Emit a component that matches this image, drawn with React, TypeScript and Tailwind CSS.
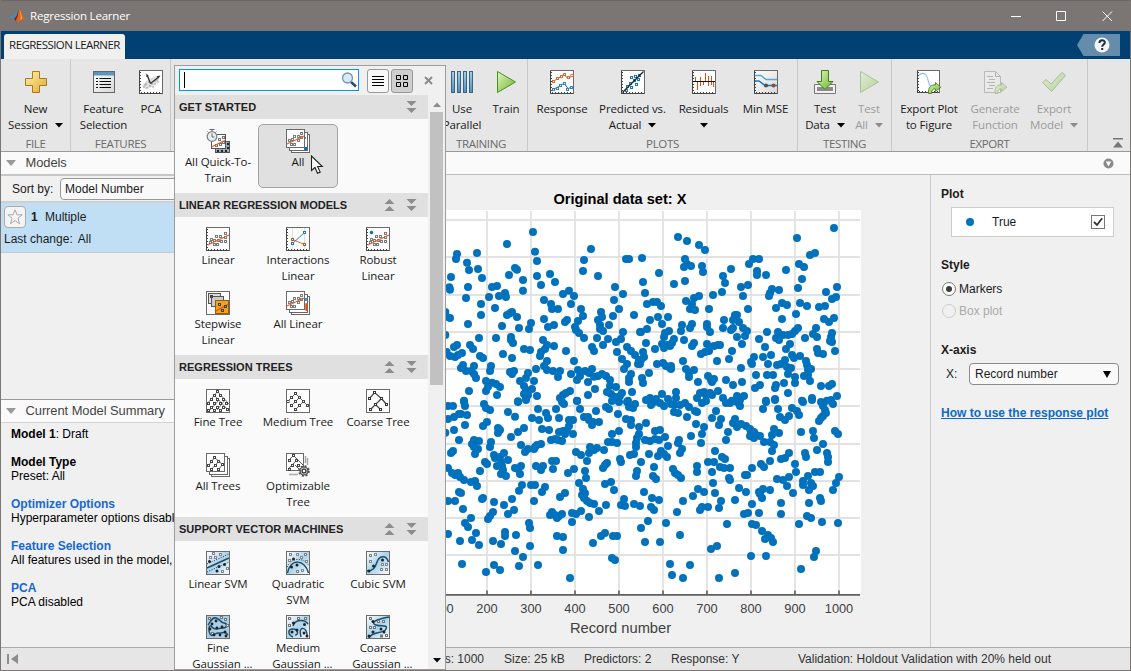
import React from "react";

type Kids = { children?: React.ReactNode };

const UPPER_LEFT =
  "279,96 201,132 111,159 51,162 48,177 81,188 87,210 114,207 126,234 33,231 28,262 30,269 84,261 78,294 156,261 171,258 147,291 177,288 195,279 198,291 207,225 225,204 231,209 249,240 249,272 285,155 291,183 291,228 303,255 330,222 345,246 453,147 432,180 429,213 474,228 558,177 567,177 525,261 549,282 522,300 369,282 387,272 402,288 393,312 312,300 333,312 336,327 354,327 537,327 519,348 582,345 423,327 429,348 483,336 486,351 474,360 414,363 405,381 408,390 417,399 432,414 480,375 480,387 489,393 507,375 375,366 381,360 312,357 342,375 324,381 273,369 267,387 237,384 231,351 216,336 201,345 210,340 186,378 165,324 123,312 123,345 84,372 30,354 16,336 18,350 16,405 117,414 168,414 213,411 213,420 219,429 309,420 321,435 342,438 315,447 303,456 300,468 252,447 270,450 189,462 216,474 120,468 129,474 90,435 99,447 51,435 42,441 20,456 30,468 45,471 66,459 54,465 69,495 63,504 78,513 102,498 93,513 102,522 108,534 153,498 150,513 210,516 222,513 216,522 321,483 312,498 321,510 288,507 339,513 360,513 354,531 264,519 258,534 240,543 282,543 252,558 258,570 276,567 252,582 264,585 258,594 138,543 156,548 144,560 168,552 180,561 138,573 87,573 72,602 171,585 291,588 234,604 378,453 402,483 393,522 414,510 411,540 420,528 435,513 456,507 447,519 462,530 486,522 474,528 498,528 510,540 444,546 465,567 444,585 411,602 390,573 378,579 369,585 360,594 501,576 510,558 528,561 513,582 525,591 546,579 540,588 564,602 576,576 573,522 567,534 567,546 546,477 561,492 552,507 531,456 456,441 462,453 471,414 489,435 504,417 528,426 543,417 549,396 561,441 573,453 585,465 597,480 594,492 600,396";

const UPPER_RIGHT =
  "582,84 471,114 114,111 141,123 177,135 195,150 6,174 9,246 15,279 57,219 135,177 132,201 141,192 153,198 186,198 189,216 135,243 102,252 273,207 249,228 255,249 246,276 219,285 303,261 324,255 309,288 324,327 351,213 351,225 378,225 327,192 339,177 357,177 438,210 474,264 486,237 477,192 492,201 510,165 525,159 591,261 558,276 588,291 576,297 396,267 417,270 387,288 390,279 408,324 426,309 441,315 480,309 501,318 537,321 555,318 468,342 426,357 138,303 162,294 177,288 156,312 150,327 165,330 207,327 21,312 39,306 51,306 63,318 54,351 84,351 30,360 66,372 21,387 3,396 126,375 123,393 156,372 150,384 201,372 201,381 210,396 252,360 249,384 285,345 279,360 291,345 297,366 279,384 273,390 309,384 321,393 315,408 291,411 306,432 552,357 567,366 582,354 528,384 519,402 531,411 576,399 573,411 570,423 576,426 585,453 495,414 474,384 465,393 456,402 444,405 429,405 414,396 408,414 417,420 381,396 357,417 375,441 393,465 369,471 384,492 342,471 333,486 336,492 303,504 267,477 276,453 231,483 222,438 240,435 234,435 201,432 207,453 195,456 183,462 162,429 156,438 132,420 102,417 96,429 75,399 87,393 72,411 66,432 81,435 72,444 90,438 45,447 18,429 9,456 12,471 3,480 0,492 51,492 69,489 78,498 93,498 90,504 93,507 129,483 138,507 147,519 162,510 147,531 174,546 204,528 213,540 222,537 216,546 258,540 279,555 306,546 348,525 381,525 399,525 345,564 360,555 408,555 405,564 432,549 444,579 465,549 465,531 444,522 453,504 441,501 435,480 411,495 423,492 456,465 462,474 480,468 498,483 501,495 513,507 504,510 492,528 504,525 510,543 543,558 567,558 576,552 591,588 516,594 486,602 561,602 531,447 534,459 549,462 438,447 450,432 378,602 405,597 291,588 312,588 249,594 300,600 276,602 234,573 216,585 198,585 192,576 180,579 171,594 210,579 108,576 66,582 108,594 84,597 30,594 48,597 18,600 27,519 9,549 6,534";

const LOWER =
  "24,18 39,18 72,6 75,18 132,12 138,24 150,30 234,6 258,0 366,6 372,12 348,27 294,27 411,3 420,27 318,39 324,54 276,54 297,60 357,54 204,36 225,50 42,51 63,42 81,45 57,42 24,57 75,75 42,90 16,98 141,66 129,78 174,84 180,90 174,99 234,96 252,84 213,111 243,135 306,87 327,90 357,96 387,60 399,60 387,78 381,90 399,102 375,102 369,93 333,120 345,117 366,123 354,120 57,120 102,120 117,123 96,132 102,141 114,147 105,162 39,153 33,159 153,126 150,141 192,159 162,165 165,174 180,171 204,180 183,186 171,198 186,198 189,210 183,222 198,228 135,186 141,192 120,213 255,156 264,147 282,147 291,135 303,132 285,141 225,204 243,198 234,207 240,222 288,198 309,198 303,210 336,183 348,183 339,207 384,219 402,207 24,204 36,219 54,219 60,231 72,240 45,225 93,246 105,243 111,258 57,276 63,279 24,303 45,303 69,327 129,294 162,306 126,297 192,315 216,297 222,330 204,342 159,336 150,348 144,357 93,354 75,369 84,381 24,402 60,423 96,420 108,399 117,435 159,423 183,432 195,396 195,408 228,405 246,255 237,272 273,255 285,255 315,261 306,276 282,303 267,369 270,384 270,438 225,453 249,471 237,498 294,495 162,495 180,510 138,516 66,492 336,336 330,345 345,345 366,342 351,354 357,348 351,408 369,411 369,450 360,291 375,279 396,366 396,339 408,342 423,333 390,534 459,429 483,408 495,399 519,408 531,408 516,474 525,480 447,351 477,333 498,315 462,312 450,309 441,303 432,294 426,285 435,280 429,267 417,249 438,234 435,213 441,183 408,156 423,165 447,159 450,141 462,150 471,144 492,150 504,126 516,126 531,129 516,102 537,93 501,189 489,204 495,195 495,252 513,246 522,270 540,177 543,186 432,51 447,60 459,66 456,75 477,66 468,33 444,51 498,21 507,27 516,3 537,6 534,42 558,57 573,60 573,75 579,24 585,12 567,21 561,6 597,81 618,69 597,102 591,114 588,129 588,141 570,165 582,162 603,186 591,213 588,228 627,162 615,120 630,123 645,117 657,120 645,93 660,90 675,111 684,138 663,153 672,162 654,168 681,171 726,147 720,159 717,120 714,129 642,201 639,228 648,237 699,207 705,219 714,225 723,234 612,276 636,294 657,300 633,321 642,330 582,312 600,318 552,297 543,315 555,318 624,363 603,384 615,426 660,426 678,369 711,336 729,303 720,405 759,288 774,267 792,276 780,330 786,321 804,321 771,198 771,216 804,186 822,186 816,216 819,249 825,279 837,324 843,303 825,153 846,171 855,177 840,201 852,204 870,204 867,234 870,240 885,300 897,264 918,276 915,225 921,225 936,204 912,342 924,339 936,312 957,339 861,372 936,372 948,375 966,393 975,417 984,405 993,414 999,426 831,438 813,447 933,468 978,468 885,519 837,534 729,534 696,525 690,492 750,495 1083,507 1122,471 1128,453 1077,372 1101,348 1113,354 1146,366 1194,369 1179,270 1188,249 1197,231 1107,309 1140,294 1143,303 1107,270 1119,258 1113,249 1089,243 1089,255 1104,228 1125,216 1140,216 1023,309 1023,342 1059,279 1041,258 1047,231 1029,240 1011,237 990,270 969,267 960,282 966,294 957,276 963,192 972,201 990,183 1023,177 1035,174 1047,159 1065,192 1068,216 1095,159 1098,171 1131,150 1149,132 1161,159 1164,171 1164,186 1083,96 1119,93 1122,114 1185,93 1194,102 996,153 1002,135 972,126 990,126 996,105 1002,87 1017,99 942,96 948,105 930,108 942,114 933,99 960,108 930,87 918,78 903,72 891,81 879,69 885,57 864,96 858,120 843,57 837,75 828,33 816,54 792,81 786,102 783,129 768,72 753,108 741,51 714,39 702,36 693,12 702,15 720,15 735,9 747,21 765,33 771,36 633,15 642,6 660,9 672,18 786,9 798,3 858,9 870,9 891,6 900,18 969,27 978,6 1005,0 1014,27 1020,51 1035,60 1047,48 1056,24 1071,33 1077,45 1089,6 1116,0 1143,6 1149,18 1155,30 1158,39 1149,48 1143,54 1137,63 1173,0 1179,12";

const parse = (s: string) => s.split(" ").map((p) => p.split(",").map(Number));

function Dots({ data, x, y }: { data: string; x: number; y: number }) {
  return (
    <g fill="#0072bd">
      {parse(data).map(([a, b], i) => (
        <circle key={i} cx={x + a / 3} cy={y + b / 3} r={4} />
      ))}
    </g>
  );
}

/* ---------- icon primitives, all on a 24 x 24 grid ---------- */

function Icon({ children, dim }: Kids & { dim?: boolean }) {
  return (
    <svg width="24" height="24" viewBox="0 0 24 24" fill="none" className={dim ? "block shrink-0 opacity-40" : "block shrink-0"}>
      {children}
    </svg>
  );
}

function Frame({ size = 24, ticks = true, fill = "#fff" }: { size?: number; ticks?: boolean; fill?: string }) {
  return (
    <g>
      <rect x=".5" y=".5" width={size - 1} height={size - 1} fill={fill} stroke="#6a6a6a" />
      {ticks && <path d={`M1.5 2V${size - 2}`} stroke="#444" strokeDasharray="1 2" />}
      {ticks && <path d={`M2 ${size - 1.5}H${size - 1}`} stroke="#444" strokeDasharray="1 2" />}
      {ticks && <path d={`M.5 1V${size - 0.5}H${size - 1}`} stroke="#444" />}
    </g>
  );
}

function Squares({ at, c = "#777", fill = "#fff", s = 2 }: { at: string; c?: string; fill?: string; s?: number }) {
  return (
    <g fill={fill} stroke={c}>
      {parse(at).map(([a, b], i) => (
        <rect key={i} x={a - s / 2} y={b - s / 2} width={s} height={s} />
      ))}
    </g>
  );
}

function Blobs({ at, c = "#222", r = 1.5 }: { at: string; c?: string; r?: number }) {
  return (
    <g fill={c}>
      {parse(at).map(([a, b], i) => (
        <circle key={i} cx={a} cy={b} r={r} />
      ))}
    </g>
  );
}

const LINEAR_PTS = "4.5,15.5 5.5,12.5 8.5,13.5 8.5,17.5 10.5,9.5 11.5,17.5 12.5,13.5 14.5,9.5 15.5,14.5 19.5,6.5 19.5,10.5 19.5,14.5";

function LinearBody() {
  return (
    <>
      <Frame />
      <Squares at={LINEAR_PTS} c="#7d7d7d" s={2} />
      <path d="M1.5 18L23 8" stroke="#e0622a" strokeWidth="1.3" />
    </>
  );
}

function SmallFit() {
  return (
    <>
      <Frame size={19} ticks={false} />
      <Squares at="3.5,11.5 6.5,10.5 5.5,15.5 8.5,15.5 8.5,7.5 12.5,7.5 15.5,4.5 15.5,8.5 12.5,11.5" c="#7d7d7d" />
      <path d="M1 15L18 7" stroke="#e0622a" strokeWidth="1.3" />
    </>
  );
}

function Stack() {
  return (
    <>
      <rect x="5.5" y="5.5" width="18" height="18" fill="#fff" stroke="#666" />
      <rect x="3.5" y="3.5" width="18" height="18" fill="#fff" stroke="#666" />
    </>
  );
}

const icons: Record<string, React.ReactNode> = {
  plus: (
    <Icon>
      <path d="M8.5 1.5h7v7h7v7h-7v7h-7v-7h-7v-7h7z" fill="url(#gold)" stroke="#a67c1a" />
    </Icon>
  ),
  features: (
    <Icon>
      <rect x="1.5" y="1.5" width="21" height="21" fill="url(#panel)" stroke="#666" />
      <rect x="2" y="2" width="20" height="3.5" fill="#5b97bd" />
      <path d="M7.5 8.5H19M7.5 11.5H19M7.5 14.5H19M7.5 17.5H19" stroke="#111" />
      <path d="M4 8.5h2M4 11.5h2M4 14.5h2M4 17.5h2" stroke="#111" />
    </Icon>
  ),
  pca: (
    <Icon>
      <Frame />
      <ellipse cx="12" cy="12.5" rx="9.5" ry="4" transform="rotate(-32 12 12.5)" fill="#dedede" />
      <Blobs at="5,17 7,14 8,18 11,16 13,14 14,17 16,11 18,10 10,12 19,12 16,14 6,15" c="#8d8d8d" r={0.7} />
      <path d="M11.5 13.5L19 7.5M11.5 13.5L8.5 6" stroke="#333" strokeWidth="1.3" />
      <path d="M21.5 5.5l-4 .8 2 2.2z M7.3 3.5l0 3.6 2.6-1z" fill="#333" />
    </Icon>
  ),
  parallel: (
    <Icon>
      {[1.5, 7.5, 13.5, 19.5].map((x) => (
        <rect key={x} x={x} y="1.5" width="3" height="21" fill="url(#blueV)" stroke="#3b6382" />
      ))}
    </Icon>
  ),
  train: (
    <Icon>
      <path d="M3.5 1.5L21.5 12L3.5 22.5z" fill="url(#green)" stroke="#4e8f1d" strokeLinejoin="round" />
    </Icon>
  ),
  trainDim: (
    <Icon dim>
      <path d="M3.5 1.5L21.5 12L3.5 22.5z" fill="url(#green)" stroke="#4e8f1d" strokeLinejoin="round" />
    </Icon>
  ),
  response: (
    <Icon>
      <Frame />
      <path d="M2 12L8 8.5L14 4.5L18 8.5L23 5.5" stroke="#d95319" />
      <Squares at="3.5,11.5 7.5,8.5 11.5,6.5 14.5,4.5 18.5,7.5 22,5.5" c="#d9693a" />
      <path d="M2 20L9 16.5L14 13L18 18.5L23 17" stroke="#0072bd" />
      <Squares at="3.5,19.5 7.5,18.5 10.5,15.5 14.5,13.5 17.5,19.5 21.5,17.5" c="#2b86c4" />
    </Icon>
  ),
  predicted: (
    <Icon>
      <Frame />
      <Squares at="5.5,20.5 6.5,16.5 9.5,13.5 10.5,7.5 13.5,10.5 17.5,9.5 18.5,5.5 14.5,6.5 15.5,14.5 10.5,17.5" c="#1a7ac0" />
      <path d="M1.5 22.5L22.5 1.5" stroke="#222" strokeWidth="1.3" />
    </Icon>
  ),
  residuals: (
    <Icon>
      <Frame />
      <path d="M3.5 7v5M5.5 11v9M8.5 7v9M11.5 11v4M13.5 3v9M16.5 6v10M19.5 6v9M21.5 11v6" stroke="#d95319" />
      <path d="M1 11.5H23" stroke="#111" />
    </Icon>
  ),
  mse: (
    <Icon>
      <Frame fill="url(#panel)" />
      <path d="M1 5.5H7L12 9.5H23" stroke="#5aa4d6" strokeWidth="1.5" />
      <path d="M1 11H5L11 15.5H23" stroke="#1a7ac0" strokeWidth="1.5" />
      <circle cx="12" cy="15.5" r="2.1" fill="#555" />
      <circle cx="19.5" cy="15.5" r="2.1" fill="#8a5136" />
    </Icon>
  ),
  testData: (
    <Icon>
      <path d="M1.5 14.5H22.5V23.5H1.5z" fill="#f2f2f2" stroke="#777" />
      <rect x="4" y="17" width="16" height="4" fill="#8b8b8b" />
      <path d="M8.5 .5h7v11h4.500L12 19.5L4 11.5h4.500z" fill="url(#green)" stroke="#3f7f16" />
    </Icon>
  ),
  exportPlot: (
    <Icon>
      <Frame size={23} />
      <path d="M2 5C7 1 10 5 11 10S14 18 18 18" stroke="#8fc0e8" strokeWidth="1.2" />
      <path d="M11.5 23.5C11 17 14 14.5 18.5 15V12.5L23.8 17.2L18.5 21.5V19C16 18.5 14.5 20 14.5 23.5z" fill="url(#green)" stroke="#4a7d1e" strokeWidth=".9" />
    </Icon>
  ),
  generate: (
    <Icon dim>
      <path d="M1.5 1.5H12.5L17.5 6.5V22.5H1.5z" fill="#eee" stroke="#777" />
      <path d="M12.5 1.5V6.5H17.5M4 6.5h6M6 9.5h6M4 12.5h8M6 15.5h6M4 18.5h6" stroke="#667" />
      <path d="M12 23.5C11.5 17 14 14.5 18.5 15V12.5L23.8 17.2L18.5 21.5V19C16 18.5 14.8 20 15 23.5z" fill="url(#green)" stroke="#4a7d1e" strokeWidth=".9" />
    </Icon>
  ),
  check: (
    <Icon dim>
      <path d="M.8 12.5L4 9.5L9 14L20 2.5L23.5 5.5L9.5 21.5z" fill="url(#green)" stroke="#4a7d1e" />
    </Icon>
  ),
  quick: (
    <Icon>
      <rect x="9.5" y="12.5" width="14" height="11" fill="#9bb3bd" stroke="#555" />
      <Blobs at="12,22 16,22 20,22 22,15 22,19" c="#222" r={1.2} />
      <rect x="5.5" y="5.5" width="14" height="14" fill="#fff" stroke="#555" />
      <Squares at="10.5,16.5 13.5,10.5 14.5,15.5 17.5,8.5 17.5,13.5" />
      <path d="M5.5 18L19.5 11" stroke="#e0622a" strokeWidth="1.3" />
      <circle cx="6" cy="7.5" r="4.800" fill="#e9f1f4" stroke="#7b8488" strokeWidth="1.3" />
      <path d="M6 .5v2M3.5 .5h5M6 4.500V8h2.500M1.500 2.500l1 1M10.500 2.500l-1 1" stroke="#666" />
    </Icon>
  ),
  all: (
    <Icon>
      <Stack />
      <rect x="18" y="18" width="3" height="3" fill="#0072bd" />
      <path d="M19.5 8v2M21.5 12v2" stroke="#777" />
      <SmallFit />
    </Icon>
  ),
  linear: (
    <Icon>
      <LinearBody />
    </Icon>
  ),
  interactions: (
    <Icon>
      <Frame />
      <path d="M6.5 1V22M18.5 1V22" stroke="#d8dfe5" />
      <path d="M6.5 12.5L18.5 17.5" stroke="#e0622a" />
      <path d="M6.5 16.5L18.5 5.5" stroke="#2b86c4" />
      <Squares at="6.5,12.5 18.5,17.5" c="#d95319" />
      <Squares at="6.5,16.5 18.5,5.5" c="#1a7ac0" />
    </Icon>
  ),
  robust: (
    <Icon>
      <LinearBody />
      <circle cx="5.5" cy="5.5" r="1.7" fill="#0072bd" />
    </Icon>
  ),
  stepwise: (
    <Icon>
      <Frame ticks={false} />
      <rect x="2.5" y="2.5" width="12" height="10" fill="#ddd" stroke="#555" />
      <rect x="5.5" y="5.5" width="12" height="10" fill="#c8ccd0" stroke="#555" />
      <rect x="9.5" y="9.5" width="13" height="13" fill="#f3a11f" stroke="#9a5a10" />
      <path d="M10 20L22 13.5" stroke="#d95319" strokeWidth="1.3" />
      <Squares at="5.5,5.5 13.5,13.5 19.5,15.5 16.5,19.5" fill="none" c="#444" />
    </Icon>
  ),
  allLinear: (
    <Icon>
      <Stack />
      <path d="M20 13h1v6h-1z" stroke="#d95319" strokeWidth="1.5" />
      <path d="M20 7v3" stroke="#0072bd" strokeWidth="1.5" />
      <SmallFit />
    </Icon>
  ),
  fineTree: (
    <Icon>
      <Frame ticks={false} />
      <path d="M1 15L11.5 2.500L23 15M4 21L13 11M11 21L19 11M8 6L22 21" stroke="#777" />
      <Squares
        at="11.5,2.5 8.5,6.5 14.5,6.5 5.5,10.5 11.5,10.5 17.5,10.5 2.5,14.5 8.5,14.5 14.5,14.5 20.5,14.5 5.5,18.5 11.5,18.5 17.5,18.5 2.5,21.5 8.5,21.5 14.5,21.5 21.5,20.5"
        c="#444"
      />
    </Icon>
  ),
  mediumTree: (
    <Icon>
      <Frame ticks={false} />
      <path d="M1.5 12.5L9.5 4.5L21.500 16.5M5.500 8.500M9.5 12.500L13.5 8.500M5.5 16.5L9.5 12.5M13.5 16.5L17.5 12.5M9.5 20.5L13.5 16.5" stroke="#666" />
      <Squares at="9.5,4.5 5.5,8.5 13.5,8.5 2,12.5 9.5,12.5 17.5,12.5 5.5,16.5 13.5,16.5 21.5,16.5 9.5,20.5" c="#444" />
    </Icon>
  ),
  coarseTree: (
    <Icon>
      <Frame ticks={false} />
      <path d="M3.5 9.5L8.5 3.5L15.5 9.5L20.5 15.5M15.5 9.5L9.5 15.5L4.5 20.5M9.5 15.5L14.5 20.5" stroke="#444" strokeWidth="1.2" />
      <Squares at="8.5,3.5 3.5,9.5 15.5,9.5 20.5,15.5 9.5,15.5 4.5,20.5 14.5,20.5" c="#333" />
    </Icon>
  ),
  allTrees: (
    <Icon>
      <Stack />
      <Frame size={19} ticks={false} />
      <path d="M2.5 12.5L8.5 4.500L16.5 11.5M5.5 16.5L12.5 8.500M12.500 16.500L16.500 11.500" stroke="#666" />
      <Squares at="8.5,4.5 5.5,8.5 12.5,8.5 2.5,12.5 9.5,12.5 16.5,11.5 5.5,16.5 12.5,16.5" c="#444" />
    </Icon>
  ),
  optTree: (
    <Icon>
      <path d="M3 21.5H12M19.5 3V10M21.5 5v7" stroke="#aaa" strokeWidth="1.5" />
      <Frame size={18} ticks={false} />
      <path d="M2 8L7.5 2.5L17 12M2 16L10 8M9 12L14 17" stroke="#555" />
      <Squares at="7.5,2.5 3.5,7.5 10.5,7.5 6.5,12.5 3.5,16.5 12.5,12.5" c="#444" />
      <circle cx="18" cy="18" r="4.9" stroke="#555" strokeWidth="1.8" strokeDasharray="2 1.85" />
      <circle cx="18" cy="18" r="4" fill="#ccc" stroke="#444" strokeWidth="1.2" />
      <circle cx="18" cy="18" r="1.9" fill="#fff" stroke="#333" strokeWidth="1.2" />
    </Icon>
  ),
  linearSvm: (
    <Icon>
      <Frame ticks={false} fill="url(#svm)" />
      <path d="M1 13L23 3M1 21L23 11" stroke="#333" strokeDasharray="1 1.5" />
      <path d="M1 17L23 7" stroke="#234d66" strokeWidth="1.5" />
      <Squares at="4.5,6.5 9.5,6.5 7.5,2.5 14.5,3.5 16.5,20.5 21.5,17.5" fill="#fff" c="#888" />
      <Blobs at="3.5,10.5 13,15.500 18.5,13.500 11,20" />
    </Icon>
  ),
  quadSvm: (
    <Icon>
      <Frame ticks={false} fill="url(#svm)" />
      <path d="M1 16C5 6 18 6 23 15" stroke="#333" strokeDasharray="1 1.5" />
      <path d="M1.5 22C4 7 19 8 22.5 22" stroke="#234d66" strokeWidth="1.5" />
      <Squares at="4.5,3.5 11.5,3.5 19.5,3.5 15.5,6.5 20.5,10.5 3.5,9.5" c="#888" />
      <Blobs at="7.5,8 11,14 5.500,16" />
      <Squares at="11.5,20.5 16.5,19.5" c="#888" />
    </Icon>
  ),
  cubicSvm: (
    <Icon>
      <Frame ticks={false} fill="url(#svm)" />
      <path d="M1 20C7 20 9 17 11 11S20 3 22.5 11" stroke="#234d66" strokeWidth="1.5" />
      <Squares at="4.5,4.5 9.5,3.5 4.5,10.5 16.5,13.5 20.5,13.5 15.5,18.5 20.5,18.5" c="#888" />
      <Blobs at="16.500,9 7.500,15 3,20" />
    </Icon>
  ),
  fineG: (
    <Icon>
      <Frame ticks={false} fill="#a9cfe8" />
      <path d="M2 10C5 6 6 2 10 3S15 8 18 8S22 13 17 13S9 16 6 12S2 15 4 19S10 17 13 18S19 15 22 20" stroke="#234d66" strokeWidth="1.5" />
      <Squares at="3.5,3.5 19.5,4.5 15.5,2.5 6.5,18.5 21.5,10.5" c="#777" />
      <Blobs at="10,6 6,9 16,12 11,13 4,14 8,20 14,20 19,17 20,21" r={1.4} />
    </Icon>
  ),
  medG: (
    <Icon>
      <Frame ticks={false} fill="url(#svm)" />
      <path d="M7 22C1 19 2 14 7 14S13 20 9 20M7 11C9 4 19 4 22 9M15 22C11 10 22 11 21 22" stroke="#234d66" strokeWidth="1.5" />
      <Squares at="3.5,3.5 3.5,10.5 12.5,3.5 19.5,3.5" c="#777" />
      <Blobs at="7.5,8 18.5,9.500 6,17 11,15 18,18 21,21" />
    </Icon>
  ),
  coarseG: (
    <Icon>
      <Frame ticks={false} fill="url(#svm)" />
      <path d="M23 2C7 5 5 8 10 10S22 9 20 14S6 16 3 23" stroke="#234d66" strokeWidth="1.5" />
      <Squares at="4.5,3.5 12.5,6.5 17.5,6.5 4.5,12.5 8.5,12.5 15.5,21 20.5,20.5" c="#777" />
      <Blobs at="7,6.5 15,14 7,17 18,17 3,21" />
    </Icon>
  ),
};

function Caret({ dim, className = "" }: { dim?: boolean; className?: string }) {
  return (
    <svg width="8" height="5" viewBox="0 0 8 5" className={"inline-block shrink-0 " + className}>
      <path d="M0 0H8L4 4.5z" fill={dim ? "#8c8c8c" : "#000"} />
    </svg>
  );
}

function Tool({ icon, a, b, caret, dim, w }: { icon: string; a: string; b?: string; caret?: boolean; dim?: boolean; w: string }) {
  return (
    <button className={"flex shrink-0 flex-col items-center pt-[11px] " + w + (dim ? " text-[#9b9b9b]" : " text-[#1a1a1a]")}>
      {icons[icon]}
      <span className="mt-[7px] h-4 leading-4 whitespace-nowrap">{a}</span>
      <span className="flex h-4 items-center gap-[7px] leading-4 whitespace-nowrap">
        {b}
        {caret && <Caret dim={dim} className="mt-px" />}
      </span>
    </button>
  );
}

function Section({ name, w, children, pad = "pl-[5px]" }: Kids & { name: string; w: string; pad?: string }) {
  return (
    <section className={"flex shrink-0 flex-col border-r border-[#c9c9c9] " + w}>
      <div className={"flex h-[77px] " + pad}>{children}</div>
      <div className="text-center text-[11.5px] leading-[15px] tracking-[-0.35px] text-[#6b6b6b]">{name}</div>
    </section>
  );
}

function Arrows({ up }: { up?: boolean }) {
  return (
    <svg width="11" height="12" viewBox="0 0 11 12" fill="#8d8d8d">
      <path d={up ? "M.5 5L5.500 0l5 5zM.5 12L5.500 7l5 5z" : "M.5 0h10L5.500 5zM.5 7h10L5.500 12z"} />
    </svg>
  );
}

function Group({ name, first, children }: Kids & { name: string; first?: boolean }) {
  return (
    <section className="shrink-0">
      <h2 className="flex h-6 items-center bg-[#e0e0e0] pr-[11px] pl-1 font-['Liberation_Sans',sans-serif] text-[11px] font-bold tracking-[0.03px] text-[#222]">
        <span className="flex-1 whitespace-nowrap">{name}</span>
        <span className="flex gap-[11px]">
          {!first && <Arrows up />}
          <Arrows />
        </span>
      </h2>
      <div className="grid grid-cols-[80px_80px_80px] auto-rows-[64px] py-[5px] pl-[3px]">{children}</div>
    </section>
  );
}

function Item({ icon, a, b, hot }: { icon: string; a: string; b?: string; hot?: boolean }) {
  return (
    <div
      className={
        "flex flex-col items-center whitespace-nowrap leading-4 " +
        (hot ? "rounded-[5px] border border-[#a3a3a3] bg-[#e0e0e0] pt-1" : "pt-[5px]")
      }
    >
      {icons[icon]}
      <span className="mt-px">{a}</span>
      <span className="h-4">{b}</span>
    </div>
  );
}

function Gallery() {
  return (
    <div className="absolute top-[65px] left-[174px] flex h-[605px] w-[272px] flex-col border border-[#9d9d9d] bg-[#f0f0f0] text-[#1a1a1a]">
      <div className="flex h-[29px] shrink-0 items-start pt-[3px] pl-1">
        <div className="flex h-[22px] w-[180px] items-center justify-between border border-[#0095f2] bg-white pr-px pl-1">
          <span className="h-4 w-px bg-black" />
          <svg width="16" height="16" viewBox="0 0 16 16" fill="none">
            <path d="M10 10l5 4.5" stroke="#2e4a63" strokeWidth="2.5" />
            <circle cx="6.5" cy="6" r="5" fill="#d5e9f7" stroke="#7d92a3" strokeWidth="1.3" />
          </svg>
        </div>
        <button className="ml-2 flex h-6 w-[22px] items-center justify-center rounded-[3px] border border-[#999] bg-[#f7f7f7]">
          <svg width="12" height="12" viewBox="0 0 12 12">
            <path d="M0 1.5H12M0 4.5H12M0 7.5H12M0 10.5H12" stroke="#000" />
          </svg>
        </button>
        <button className="ml-[2px] flex h-6 w-[22px] items-center justify-center rounded-[3px] border border-[#999] bg-[#cfcfcf]">
          <svg width="12" height="12" viewBox="0 0 12 12" fill="none" stroke="#000">
            <path d="M.5 .5h4v4h-4zM7.5 .5h4v4h-4zM.5 7.5h4v4h-4zM7.5 7.5h4v4h-4z" />
          </svg>
        </button>
        <svg width="9" height="9" viewBox="0 0 9 9" className="mt-[7px] ml-[11px]">
          <path d="M1 1l7 7M8 1L1 8" stroke="#8a8a8a" strokeWidth="2" />
        </svg>
      </div>
      <div className="flex min-h-0 flex-1">
        <div className="flex w-[253px] flex-col overflow-hidden bg-[#fafafa]">
          <Group name="GET STARTED" first>
            <Item icon="quick" a="All Quick-To-" b="Train" />
            <Item icon="all" a="All" hot />
          </Group>
          <Group name="LINEAR REGRESSION MODELS">
            <Item icon="linear" a="Linear" />
            <Item icon="interactions" a="Interactions" b="Linear" />
            <Item icon="robust" a="Robust" b="Linear" />
            <Item icon="stepwise" a="Stepwise" b="Linear" />
            <Item icon="allLinear" a="All Linear" />
          </Group>
          <Group name="REGRESSION TREES">
            <Item icon="fineTree" a="Fine Tree" />
            <Item icon="mediumTree" a="Medium Tree" />
            <Item icon="coarseTree" a="Coarse Tree" />
            <Item icon="allTrees" a="All Trees" />
            <Item icon="optTree" a="Optimizable" b="Tree" />
          </Group>
          <Group name="SUPPORT VECTOR MACHINES">
            <Item icon="linearSvm" a="Linear SVM" />
            <Item icon="quadSvm" a="Quadratic" b="SVM" />
            <Item icon="cubicSvm" a="Cubic SVM" />
            <Item icon="fineG" a="Fine" b="&nbsp;&nbsp;&nbsp;Gaussian&nbsp;..." />
            <Item icon="medG" a="Medium" b="&nbsp;&nbsp;&nbsp;Gaussian&nbsp;..." />
            <Item icon="coarseG" a="Coarse" b="&nbsp;&nbsp;&nbsp;Gaussian&nbsp;..." />
          </Group>
        </div>
        <div className="flex flex-1 flex-col items-center bg-[#f0f0f0] pt-[7px] pb-[6px]">
          <Caret dim className="rotate-180" />
          <div className="mt-[5px] h-[273px] w-[13px] bg-[#c1c1c1]" />
          <div className="flex-1" />
          <Caret />
        </div>
      </div>
    </div>
  );
}

function PanelTitle({ children }: Kids) {
  return (
    <div className="flex h-[22px] items-center bg-[#fafafa] pl-[5px] text-[12.9px] tracking-[-0.05px] text-[#444]">
      <svg width="10" height="6" viewBox="0 0 10 6" className="mr-[9.5px]">
        <path d="M0 0h10L5 6z" fill="#999" />
      </svg>
      <span className="whitespace-nowrap">{children}</span>
    </div>
  );
}

function Sidebar() {
  return (
    <aside className="flex w-[174px] shrink-0 flex-col overflow-hidden">
      <PanelTitle>Models</PanelTitle>
      <div className="flex h-[29px] items-center border-y-2 border-t-[#c6c6c6] border-b-[#cfcfcf] bg-[#f0f0f0] pl-[11px] whitespace-nowrap">
        <span className="w-[48px] shrink-0">Sort by:</span>
        <span className="flex h-[22px] w-[140px] shrink-0 items-center rounded-[4px] border border-[#999] bg-[#f9f9f9] pl-1">Model Number</span>
      </div>
      <div className="h-[50px] border-b border-[#c9c9c9] bg-[#c0dff4] pt-[3px]">
        <div className="flex h-[22px] items-center pl-[3px]">
          <span className="flex h-[22px] w-[22px] items-center justify-center rounded-[4px] border border-[#aaa] bg-[#f4f4f4]">
            <svg width="16" height="16" viewBox="0 0 16 16" fill="none" stroke="#aaa">
              <path d="M8 .8l2 5h5.200L11 9.200l1.600 5.600L8 11.600l-4.600 3.200L5 9.200L.8 5.800H6z" />
            </svg>
          </span>
          <b className="ml-[5px] w-[14px]">1</b>
          <span>Multiple</span>
        </div>
        <div className="pl-[3px] leading-[22px]">
          Last change:<span className="ml-[5px]">All</span>
        </div>
      </div>
      <div className="h-[146px]" />
      <div className="border-t border-b border-t-[#999] border-b-[#d4d4d4]">
        <PanelTitle>Current Model Summary</PanelTitle>
      </div>
      <div className="flex flex-col gap-[14px] pt-1 pl-[10px] leading-[14px] whitespace-nowrap text-black [&_b]:block [&_h3]:font-bold [&_h3]:text-[#1668d2]">
        <p>
          <strong>Model 1</strong>: Draft
        </p>
        <p>
          <b>Model Type</b>Preset: All
        </p>
        <div>
          <h3>Optimizer Options</h3>
          <p>Hyperparameter options disabled</p>
        </div>
        <div>
          <h3>Feature Selection</h3>
          <p>All features used in the model, before PCA</p>
        </div>
        <div>
          <h3>PCA</h3>
          <p>PCA disabled</p>
        </div>
      </div>
    </aside>
  );
}

const V_GRID = [487, 531, 575, 619, 663, 707, 751, 795, 839];
const H_GRID = [220, 257, 295, 332, 369, 406, 444, 481, 518, 555];

function Chart() {
  return (
    <svg width="486" height="472" viewBox="444 175 486 472" className="block shrink-0" fontFamily="'Liberation Sans', Arial, sans-serif">
      <rect x="444" y="210" width="417" height="384" fill="#fff" />
      <g stroke="#e2e2e2" strokeWidth="1.800">
        {V_GRID.map((x) => (
          <path key={x} d={`M${x} 211V594`} />
        ))}
        {H_GRID.map((y) => (
          <path key={y} d={`M444 ${y}H860`} />
        ))}
      </g>
      <Dots data={UPPER_LEFT} x={440} y={200} />
      <Dots data={UPPER_RIGHT} x={640} y={200} />
      <Dots data={LOWER} x={440} y={400} />
      <path d="M444 594.8H860" stroke="#606060" strokeWidth="1.800" />
      <g stroke="#555" strokeWidth="1.5">
        {V_GRID.map((x) => (
          <path key={x} d={`M${x} 590.5V594.5`} />
        ))}
      </g>
      <g fontSize="12.8" fill="#404040" textAnchor="middle">
        {V_GRID.map((x, i) => (
          <text key={x} x={x} y="613">
            {200 + i * 100}
          </text>
        ))}
        <text x="443" y="613">100</text>
      </g>
      <text x="620.5" y="633" fontSize="14.7" fill="#404040" textAnchor="middle">
        Record number
      </text>
      <text x="620" y="204" fontSize="14.6" fontWeight="700" fill="#000" textAnchor="middle">
        Original data set: X
      </text>
    </svg>
  );
}

function Options() {
  return (
    <div className="flex flex-1 flex-col border-l border-[#c9c9c9] pl-[10px] text-[#1c1c1c]">
      <h3 className="mt-[11px] h-4 leading-4 font-bold">Plot</h3>
      <div className="mt-[5px] ml-[10px] flex h-[30px] w-[163px] items-center border border-[#ccc] bg-white pl-[14px]">
        <span className="h-2 w-2 rounded-full bg-[#0072bd]" />
        <span className="ml-[18px] flex-1">True</span>
        <span className="mr-2 flex h-[14px] w-[14px] items-center justify-center border border-[#777] bg-white">
          <svg width="10" height="10" viewBox="0 0 10 10" fill="none">
            <path d="M1 5l3 3L9.200 1.200" stroke="#333" strokeWidth="1.800" />
          </svg>
        </span>
      </div>
      <h3 className="mt-5 h-4 leading-4 font-bold">Style</h3>
      <label className="mt-2 flex h-4 items-center gap-[3px]">
        <span className="ml-px flex h-[14px] w-[14px] items-center justify-center rounded-full border border-[#777] bg-white">
          <span className="h-[6px] w-[6px] rounded-full bg-[#3c3c3c]" />
        </span>
        Markers
      </label>
      <label className="mt-[6px] flex h-4 items-center gap-[3px] text-[#aaa]">
        <span className="ml-px h-[14px] w-[14px] rounded-full border border-[#ccc]" />
        Box plot
      </label>
      <h3 className="mt-[23px] h-4 leading-4 font-bold">X-axis</h3>
      <div className="mt-[5px] flex items-center">
        <span className="w-[28px] pl-[5px]">X:</span>
        <span className="flex h-[22px] w-[150px] items-center justify-between rounded-[4px] border border-[#8a8a8a] bg-[#f9f9f9] pr-[7px] pl-[5px]">
          Record number
          <svg width="8" height="7" viewBox="0 0 8 7">
            <path d="M0 0h8L4 7z" />
          </svg>
        </span>
      </div>
      <a className="mt-5 leading-4 font-bold text-[#0b6bc8] underline">How to use the response plot</a>
    </div>
  );
}

export default function App() {
  return (
    <div className="relative flex h-[671px] w-[1131px] flex-col overflow-hidden border-r border-b border-l border-[#7b7574] bg-[#f0f0f0] font-['Liberation_Sans',Arial,sans-serif] text-[12px] text-[#1c1c1c]">
      <svg width="0" height="0" className="absolute">
        <defs>
          <linearGradient id="gold" x1="0" y1="0" x2="1" y2="1">
            <stop stopColor="#fff3b0" />
            <stop offset="1" stopColor="#e0a92a" />
          </linearGradient>
          <linearGradient id="green" x1="0" y1="0" x2="1" y2="1">
            <stop stopColor="#e2f5c4" />
            <stop offset="1" stopColor="#6cb42a" />
          </linearGradient>
          <linearGradient id="blueV" x1="0" y1="0" x2="0" y2="1">
            <stop stopColor="#a3cfe9" />
            <stop offset="1" stopColor="#4f90bd" />
          </linearGradient>
          <linearGradient id="panel" x1="0" y1="0" x2="1" y2="1">
            <stop stopColor="#fff" />
            <stop offset="1" stopColor="#d8d8d8" />
          </linearGradient>
          <linearGradient id="svm" x1="0" y1="0" x2="1" y2="1">
            <stop stopColor="#fff" />
            <stop offset=".5" stopColor="#a9d2ec" />
            <stop offset="1" stopColor="#fff" />
          </linearGradient>
        </defs>
      </svg>

      <header className="flex h-[31px] shrink-0 items-center border-t border-[#6b6564] bg-[#7b7574] pl-[9px] font-['Open_Sans',sans-serif] text-[11.5px] tracking-[-0.2px] text-white">
        <svg width="16" height="16" viewBox="0 0 16 16" className="mr-1">
          <path d="M0 9L4.500 7L9 1L7 9L3.500 11.500z" fill="#3b8fc4" />
          <path d="M4 11L6.500 8L9 1L8.500 8L6 13z" fill="#7a2518" />
          <path d="M9 1C10.500 1 12 7 15.500 12.500C13 10.500 11.500 11 8 15C7.500 13 7 12.500 5.500 12.500C8 10 8.300 4 9 1z" fill="#e2651f" />
          <path d="M9.300 2C10.500 4 11 8 10.500 12L12 10.800C11.500 6 10.500 3 9.300 2z" fill="#f9b04b" />
        </svg>
        <span className="flex-1">Regression Learner</span>
        <svg width="104" height="12" viewBox="0 0 104 12" fill="none" stroke="#fff" className="mr-4 mb-px">
          <path d="M1 6.500h10M46.500 1.500h9v9h-9zM92.500 1.500l9.500 9.500M102 1.500L92.500 11" />
        </svg>
      </header>

      <nav className="flex h-7 shrink-0 items-end justify-between bg-[#004072] pr-[10px] pl-[3px] font-['Open_Sans',sans-serif]">
        <div className="flex h-[25px] w-[121px] items-center justify-center rounded-t-[3px] bg-[#f0f0f0] pb-[3px] text-[11.5px] tracking-[-0.55px] whitespace-nowrap text-[#1c1c1c]">
          REGRESSION LEARNER
        </div>
        <svg width="43" height="22" viewBox="0 0 43 22" className="mb-[3px]">
          <path d="M6.500 0H43V22H6.500L0 11z" fill="#668cac" />
          <circle cx="25" cy="11" r="7.500" fill="#f3f5f7" />
          <path d="M22.400 9c0-3.800 5.400-3.600 5.400-.5c0 2-2.600 2-2.600 4.300M25.200 14v2" fill="none" stroke="#1c3048" strokeWidth="2" />
        </svg>
      </nav>

      <div className="flex h-[93px] shrink-0 border-b border-[#999] bg-[#e6e6e6] font-['Open_Sans',sans-serif] text-[11.5px] tracking-[-0.12px]">
        <Section name="FILE" w="w-[70px]" pad="pl-0">
          <Tool icon="plus" a="New" b="Session" caret w="w-[69px]" />
        </Section>
        <Section name="FEATURES" w="w-[100px]">
          <Tool icon="features" a="Feature" b="Selection" w="w-[55px]" />
          <Tool icon="pca" a="PCA" w="w-[40px]" />
        </Section>
        <div className="w-[264px] shrink-0" />
        <Section name="TRAINING" w="w-[93px]" pad="pl-[3px]">
          <Tool icon="parallel" a="Use" b="Parallel" w="w-[48px]" />
          <Tool icon="train" a="Train" w="w-[40px]" />
        </Section>
        <Section name="PLOTS" w="w-[270px]">
          <Tool icon="response" a="Response" w="w-[58px]" />
          <Tool icon="predicted" a="Predicted vs." b="Actual" caret w="w-[83px]" />
          <Tool icon="residuals" a="Residuals" caret w="w-[59px]" />
          <Tool icon="mse" a="Min MSE" w="w-[65px]" />
        </Section>
        <Section name="TESTING" w="w-[94px]">
          <Tool icon="testData" a="Test" b="Data" caret w="w-[44px]" />
          <Tool icon="trainDim" a="Test" b="All" caret dim w="w-[44px]" />
        </Section>
        <Section name="EXPORT" w="w-[196px]">
          <Tool icon="exportPlot" a="Export Plot" b="to Figure" w="w-[64px]" />
          <Tool icon="generate" a="Generate" b="Function" dim w="w-[68px]" />
          <Tool icon="check" a="Export" b="Model" caret dim w="w-[50px]" />
        </Section>
        <div className="flex flex-1 items-end justify-end pr-[7px] pb-[3px]">
          <svg width="10" height="10" viewBox="0 0 10 10" fill="#777">
            <path d="M0 0h10v1.500H0zM5 3.500L10 9.500H0z" />
          </svg>
        </div>
      </div>

      <div className="flex h-[495px] shrink-0">
        <Sidebar />
        <main className="flex flex-1 flex-col">
          <div className="flex h-[23px] shrink-0 items-center justify-end border-b border-[#bdbdbd] bg-[#fafafa] pr-4">
            <svg width="11" height="11" viewBox="0 0 11 11">
              <circle cx="5.500" cy="5.500" r="5" fill="#8a8a8a" />
              <path d="M2.800 3.500h5.400L5.500 8.500z" fill="#fff" />
            </svg>
          </div>
          <div className="flex min-h-0 flex-1 pl-[269px]">
            <Chart />
            <Options />
          </div>
        </main>
      </div>

      <footer className="flex flex-1 items-center border-t border-[#aaa] bg-[#e6e6e6] whitespace-nowrap text-[#333]">
        <svg width="11" height="10" viewBox="0 0 11 10" fill="#8d8d8d" className="ml-[6px]">
          <path d="M0 0h2v10H0zM11 0v10L4 5z" />
        </svg>
        <div className="ml-[427px] flex w-[39px] justify-end overflow-hidden">Observations: 1000</div>
        <span className="ml-5 w-[80px]">Size: 25 kB</span>
        <span className="w-[87px]">Predictors: 2</span>
        <span className="w-[127px]">Response: Y</span>
        <span>Validation: Holdout Validation with 20% held out</span>
      </footer>

      <div className="absolute inset-y-0 -left-px w-0 font-['Open_Sans',sans-serif] text-[11.5px] tracking-[-0.08px]">
        <Gallery />
        <svg width="14" height="20" viewBox="0 0 14 20" className="absolute top-[155px] left-[310px]">
          <path d="M1.500 1v14.500l3.500-3l2.500 5.800l2.700-1.200l-2.600-5.600h4.700z" fill="#fff" stroke="#222" strokeWidth="1.100" />
        </svg>
      </div>
    </div>
  );
}
